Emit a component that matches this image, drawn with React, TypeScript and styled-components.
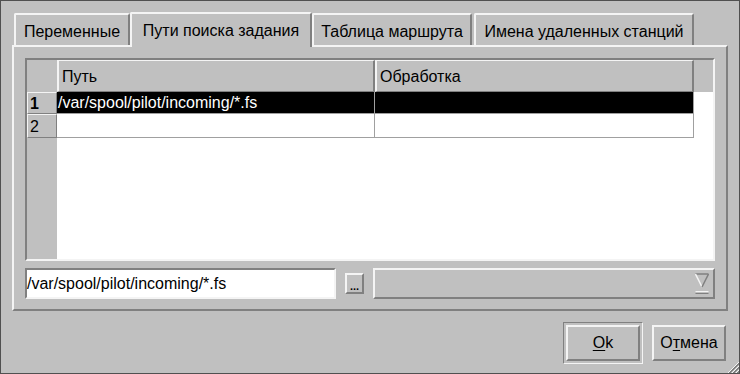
import React, { FC } from "react";
import styled, { createGlobalStyle } from "styled-components";

const LIGHT = "#f4f4f4";
const DARK = "#808080";
const BG = "#c0c0c0";

const Global = createGlobalStyle`
  html, body {
    margin: 0;
    padding: 0;
    background: ${BG};
  }
  body {
    font-family: "Liberation Sans", Arial, sans-serif;
    font-size: 16px;
    color: #000;
  }
`;

const Window = styled.div`
  position: relative;
  box-sizing: border-box;
  width: 740px;
  height: 374px;
  border: 1px solid #505050;
  background: ${BG};
  padding: 11px 11px 0 11px;
  display: flex;
  flex-direction: column;
`;

const TabBar = styled.div`
  display: flex;
  align-items: flex-end;
  height: 33px;
  padding-left: 2px;
  position: relative;
  z-index: 2;
`;

const Tab = styled.div<{ $w: number; $active?: boolean; $gap?: number }>`
  box-sizing: border-box;
  width: ${({ $w }) => $w}px;
  height: ${({ $active }) => ($active ? 35 : 32)}px;
  margin-left: ${({ $gap }) => $gap || 0}px;
  margin-bottom: ${({ $active }) => ($active ? -2 : 0)}px;
  background: ${BG};
  border-top: 2px solid ${LIGHT};
  border-left: 2px solid ${LIGHT};
  border-right: 2px solid ${DARK};
  border-radius: 2px 2px 0 0;
  display: flex;
  align-items: center;
  justify-content: center;
  padding-top: ${({ $active }) => ($active ? 0 : 3)}px;
  white-space: nowrap;
`;

const Panel = styled.div`
  box-sizing: border-box;
  height: 266px;
  border-top: 2px solid ${LIGHT};
  border-left: 2px solid ${LIGHT};
  border-right: 2px solid ${DARK};
  border-bottom: 2px solid ${DARK};
  padding: 11px 11px 10px 11px;
  display: flex;
  flex-direction: column;
  gap: 7px;
`;

const Table = styled.div`
  box-sizing: border-box;
  height: 203px;
  border-style: solid;
  border-width: 2px;
  border-color: ${DARK} ${LIGHT} ${LIGHT} ${DARK};
  background: #fff;
  display: flex;
  flex-direction: column;
`;

const HeaderRow = styled.div`
  display: flex;
  height: 32px;
  background: ${BG};
  flex-shrink: 0;
`;

const Corner = styled.div`
  width: 30px;
`;

const HeaderCell = styled.div<{ $w: number }>`
  box-sizing: border-box;
  width: ${({ $w }) => $w}px;
  border-top: 1px solid ${LIGHT};
  border-left: 2px solid ${LIGHT};
  border-right: 2px solid ${DARK};
  border-bottom: 1px solid ${DARK};
  padding: 2px 0 0 3px;
  display: flex;
  align-items: center;
`;

const Body = styled.div`
  flex: 1;
  display: flex;
`;

const RowHeaders = styled.div`
  width: 30px;
  background: ${BG};
  display: flex;
  flex-direction: column;
`;

const RowHeader = styled.div<{ $h: number; $current?: boolean }>`
  box-sizing: border-box;
  height: ${({ $h }) => $h}px;
  border-top: 1px solid ${LIGHT};
  border-left: 1px solid ${LIGHT};
  border-right: 1px solid ${DARK};
  border-bottom: 1px solid ${DARK};
  padding: 2px 0 0 2px;
  display: flex;
  align-items: center;
  font-weight: ${({ $current }) => ($current ? 700 : 400)};
`;

const Rows = styled.div`
  display: flex;
  flex-direction: column;
`;

const Row = styled.div<{ $h: number; $selected?: boolean }>`
  display: flex;
  height: ${({ $h }) => $h}px;
  background: ${({ $selected }) => ($selected ? "#000" : "#fff")};
  color: ${({ $selected }) => ($selected ? "#fff" : "#000")};
`;

const Cell = styled.div<{ $w: number }>`
  box-sizing: border-box;
  width: ${({ $w }) => $w}px;
  border-right: 1px solid #a0a0a0;
  border-bottom: 1px solid #a0a0a0;
  padding: 1px 0 0 1px;
  display: flex;
  align-items: center;
  white-space: nowrap;
`;

const EditRow = styled.div`
  display: flex;
  align-items: center;
  height: 31px;
`;

const LineEdit = styled.div`
  box-sizing: border-box;
  width: 311px;
  height: 31px;
  background: #fff;
  border-style: solid;
  border-width: 2px;
  border-color: ${DARK} ${LIGHT} ${LIGHT} ${DARK};
  padding: 1px 0 0 0;
  display: flex;
  align-items: center;
  white-space: nowrap;
`;

const DotsButton = styled.div`
  box-sizing: border-box;
  width: 19px;
  height: 21px;
  margin-left: 9px;
  border-style: solid;
  border-width: 2px;
  border-color: ${LIGHT} ${DARK} ${DARK} ${LIGHT};
  display: flex;
  align-items: flex-end;
  justify-content: center;
  font-size: 11px;
  line-height: 11px;
  font-weight: 700;
  letter-spacing: 0px;
`;

const Combo = styled.div`
  box-sizing: border-box;
  flex: 1;
  margin-left: 9px;
  height: 31px;
  border-style: solid;
  border-width: 2px;
  border-color: ${LIGHT} ${DARK} ${DARK} ${LIGHT};
  display: flex;
  align-items: center;
  justify-content: flex-end;
  padding-right: 4px;
`;

const Footer = styled.div`
  flex: 1;
  display: flex;
  justify-content: flex-end;
  align-items: center;
  gap: 9px;
  padding-right: 2px;
  padding-top: 1px;
`;

const DefaultFrame = styled.div`
  border-style: solid;
  border-width: 1px;
  border-color: ${DARK} ${LIGHT} ${LIGHT} ${DARK};
  padding: 2px;
`;

const Button = styled.div`
  box-sizing: border-box;
  width: 74px;
  height: 36px;
  border-style: solid;
  border-width: 2px;
  border-color: ${LIGHT} ${DARK} ${DARK} ${LIGHT};
  display: flex;
  align-items: center;
  justify-content: center;
  padding-top: 1px;
`;

const Mnemonic = styled.span`
  text-decoration: underline;
  text-underline-offset: 2px;
`;

const Grip = styled.svg`
  position: absolute;
  right: 0;
  bottom: 0;
`;

const ComboArrow: FC = () => (
  <svg width="14" height="22" viewBox="0 0 14 22">
    <polygon points="0.5,1 13.5,1 7,14" fill={BG} />
    <line x1="0.5" y1="1" x2="13.5" y2="1" stroke={DARK} strokeWidth="1.5" />
    <line x1="0.5" y1="1" x2="7" y2="14" stroke={LIGHT} strokeWidth="1.5" />
    <line x1="13.5" y1="1" x2="7" y2="14" stroke={DARK} strokeWidth="1.5" />
    <rect x="0.5" y="18" width="13" height="3" fill={BG} />
    <line x1="0.5" y1="18.5" x2="13.5" y2="18.5" stroke={LIGHT} strokeWidth="1" />
    <line x1="0.5" y1="20.5" x2="13.5" y2="20.5" stroke={DARK} strokeWidth="1" />
  </svg>
);

const tabs = [
  { title: "Переменные", w: 116 },
  { title: "Пути поиска задания", w: 182, active: true },
  { title: "Таблица маршрута", w: 160 },
  { title: "Имена удаленных станций", w: 220, gap: 2 },
];

const rows = [
  { n: 1, h: 22, path: "/var/spool/pilot/incoming/*.fs", proc: "", selected: true },
  { n: 2, h: 24, path: "", proc: "" },
];

const App: FC = () => {
  return (
    <>
      <Global />
      <Window>
        <TabBar>
          {tabs.map((t, i) => (
            <Tab key={i} $w={t.w} $active={t.active} $gap={t.gap}>
              {t.title}
            </Tab>
          ))}
        </TabBar>
        <Panel>
          <Table>
            <HeaderRow>
              <Corner />
              <HeaderCell $w={318}>Путь</HeaderCell>
              <HeaderCell $w={319}>Обработка</HeaderCell>
            </HeaderRow>
            <Body>
              <RowHeaders>
                {rows.map((r) => (
                  <RowHeader key={r.n} $h={r.h} $current={r.selected}>
                    {r.n}
                  </RowHeader>
                ))}
              </RowHeaders>
              <Rows>
                {rows.map((r) => (
                  <Row key={r.n} $h={r.h} $selected={r.selected}>
                    <Cell $w={318}>{r.path}</Cell>
                    <Cell $w={319}>{r.proc}</Cell>
                  </Row>
                ))}
              </Rows>
            </Body>
          </Table>
          <EditRow>
            <LineEdit>/var/spool/pilot/incoming/*.fs</LineEdit>
            <DotsButton>...</DotsButton>
            <Combo>
              <ComboArrow />
            </Combo>
          </EditRow>
        </Panel>
        <Footer>
          <DefaultFrame>
            <Button>
              <Mnemonic>O</Mnemonic>k
            </Button>
          </DefaultFrame>
          <Button>
            О<Mnemonic>т</Mnemonic>мена
          </Button>
        </Footer>
        <Grip width="14" height="14" viewBox="0 0 14 14">
          {[3, 7, 11].map((o) => (
            <g key={o}>
              <line x1={o} y1="14" x2="14" y2={o} stroke={LIGHT} strokeWidth="1" />
              <line x1={o + 1} y1="14" x2="14" y2={o + 1} stroke={DARK} strokeWidth="1" />
              <line x1={o + 2} y1="14" x2="14" y2={o + 2} stroke={DARK} strokeWidth="1" />
            </g>
          ))}
        </Grip>
      </Window>
    </>
  );
};

export default App;
